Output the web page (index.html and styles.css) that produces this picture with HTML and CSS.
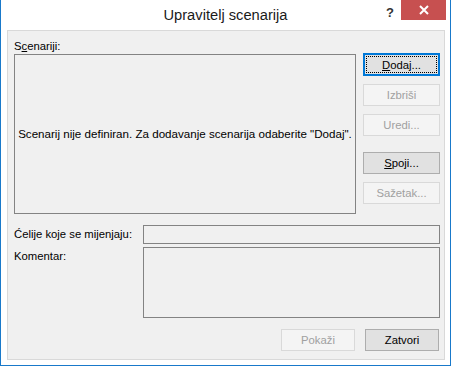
FILE: index.html
```html
<!DOCTYPE html>
<html lang="hr">
<head>
  <meta charset="utf-8">
  <title>Upravitelj scenarija</title>
  <link rel="stylesheet" href="styles.css">
</head>
<body>
  <div class="window">
    <div class="titlebar">
      <div class="spacer"></div>
      <div class="title">Upravitelj scenarija</div>
      <div class="controls">
        <span class="help">?</span>
        <span class="close">
          <svg width="10" height="10" viewBox="0 0 10 10">
            <path d="M1 1 L9 9 M9 1 L1 9" stroke="#fff" stroke-width="2" fill="none"/>
          </svg>
        </span>
      </div>
    </div>

    <div class="client">
      <div class="label top">S<u>c</u>enariji:</div>
      <div class="scenarios">
        <div class="list">Scenarij nije definiran. Za dodavanje scenarija odaberite "Dodaj".</div>
        <div class="side">
          <div class="btn default"><span class="focus"><u>D</u>odaj...</span></div>
          <div class="btn disabled">Izbriši</div>
          <div class="btn disabled">Uredi...</div>
          <div class="btn merge"><u>S</u>poji...</div>
          <div class="btn disabled">Sažetak...</div>
        </div>
      </div>

      <div class="field">
        <div class="label">Ćelije koje se mijenjaju:</div>
        <div class="input"></div>
      </div>
      <div class="field comment">
        <div class="label">Komentar:</div>
        <div class="input area"></div>
      </div>

      <div class="actions">
        <div class="btn disabled">Pokaži</div>
        <div class="btn">Zatvori</div>
      </div>
    </div>
  </div>
</body>
</html>
```

FILE: styles.css
```css
html {
  box-sizing: border-box;
}

*, *:before, *:after {
  box-sizing: inherit;
}

body {
  margin: 0;
  background: #fff;
  font-family: "Liberation Sans", Arial, sans-serif;
  font-size: 11.3px;
  color: #000;
}

.window {
  width: 451px;
  height: 366px;
  border: 1px solid #1979ca;
  border-top: none;
  background: #fff;
  display: flex;
  flex-direction: column;
  padding: 0 5px 5px 6px;
}

.titlebar {
  display: flex;
  height: 30px;
  margin-left: -6px;
  margin-right: -5px;
}

.spacer {
  width: 69px;
}

.title {
  flex: 1;
  text-align: center;
  font-size: 14.7px;
  color: #1a1a1a;
  padding-top: 7px;
}

.controls {
  width: 69px;
  display: flex;
  align-items: flex-start;
  padding-right: 4px;
}

.help {
  width: 18px;
  margin-right: 2px;
  text-align: center;
  font-weight: bold;
  font-size: 13px;
  color: #333;
  padding-top: 5px;
}

.close {
  width: 45px;
  height: 20px;
  background: #c75050;
  display: flex;
  align-items: center;
  justify-content: center;
}

.client {
  flex: 1;
  background: #f0f0f0;
  border: 1px solid #d9d9d9;
  padding: 8px 4px 8px 6px;
  display: flex;
  flex-direction: column;
}

.label {
  line-height: 15px;
  white-space: nowrap;
}

.scenarios {
  display: flex;
  gap: 7px;
}

.list {
  width: 342px;
  height: 160px;
  border: 1px solid #838383;
  display: flex;
  align-items: center;
  justify-content: center;
  white-space: nowrap;
  font-size: 11.6px;
  padding-bottom: 1px;
}

.side {
  width: 77px;
  display: flex;
  flex-direction: column;
  gap: 8px;
  margin-top: -1px;
}

.btn {
  height: 22px;
  border: 1px solid #adadad;
  background: #e1e1e1;
  display: flex;
  align-items: center;
  justify-content: center;
}

.btn.disabled {
  border-color: #d9d9d9;
  background: #f4f4f4;
  color: #a0a0a0;
}

.btn.default {
  height: 23px;
  border: 2px solid #0078d7;
  padding: 1px;
}

.focus {
  flex: 1;
  align-self: stretch;
  border: 1px dotted #000;
  display: flex;
  align-items: center;
  justify-content: center;
}

.btn.merge {
  margin-top: 8px;
}

.field {
  display: flex;
  margin-top: 11px;
}

.field .label {
  width: 129px;
  padding-top: 2px;
}

.field.comment {
  margin-top: 3px;
}

.input {
  width: 297px;
  height: 19px;
  border: 1px solid #838383;
}

.input.area {
  height: 71px;
}

.actions {
  display: flex;
  justify-content: flex-end;
  gap: 10px;
  margin-top: 11px;
  padding-right: 1px;
}

.actions .btn {
  width: 74px;
}
```
